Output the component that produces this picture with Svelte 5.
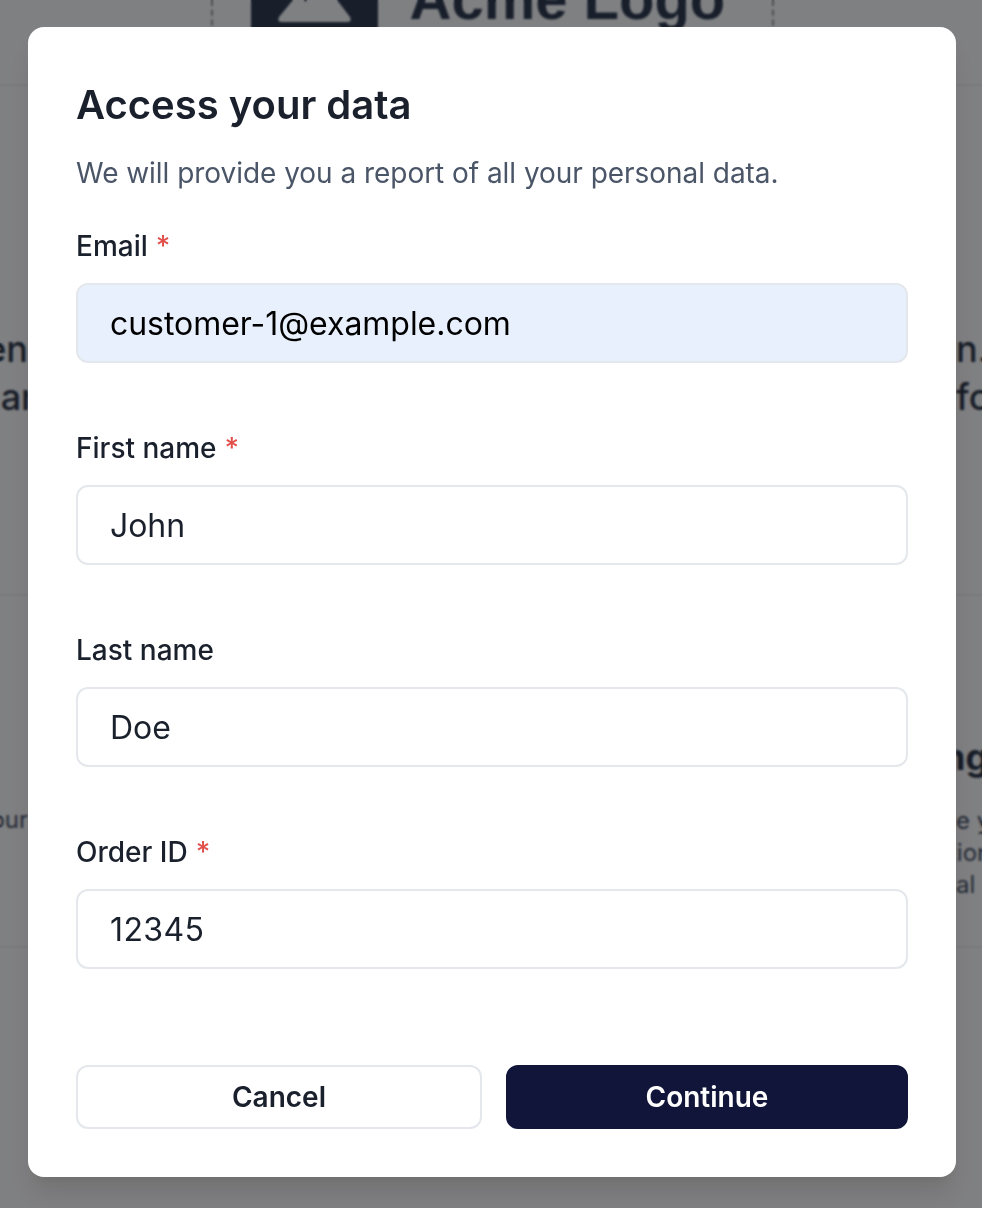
<script lang="ts">
  type Field = { label: string; value: string; required: boolean; filled?: boolean; numeric?: boolean };

  const fields: Field[] = [
    { label: 'Email', value: 'customer-1@example.com', required: true, filled: true },
    { label: 'First name', value: 'John', required: true },
    { label: 'Last name', value: 'Doe', required: false },
    { label: 'Order ID', value: '12345', required: true, numeric: true }
  ];
</script>

<div class="page">
  <header class="site-header">
    <div class="logo-frame">
      <div class="logo-mark">
        <svg width="127" height="24" viewBox="0 0 127 24" aria-hidden="true">
          <path d="M42 0 L53 0 L54.5 2 L56 0 L86 0 L99 17 Q101.5 22 96 22 L31 22 Q25.5 22 28 17 Z" fill="#fff" />
        </svg>
      </div>
      <span class="logo-text">Acme Logo</span>
    </div>
  </header>

  <section class="band band-top">
    <div class="edge edge-left">
      <p class="big">en</p>
      <p class="big nudge">tar</p>
    </div>
    <div class="edge edge-right">
      <p class="big">n.</p>
      <p class="big">fo</p>
    </div>
  </section>

  <section class="band band-mid">
    <div class="edge edge-left">
      <p class="small">our</p>
    </div>
    <div class="edge edge-right">
      <p class="heading">ng</p>
      <p class="small">e y</p>
      <p class="small cut">tion</p>
      <p class="small">al</p>
    </div>
  </section>
</div>

<div class="overlay">
  <div class="modal">
    <h2>Access your data</h2>
    <p class="desc">We will provide you a report of all your personal data.</p>

    <form class="fields">
      {#each fields as field}
        <div class="field">
          <label for={field.label}>
            {field.label}{#if field.required}<span class="req">*</span>{/if}
          </label>
          <input id={field.label} class:filled={field.filled} class:numeric={field.numeric} value={field.value} />
        </div>
      {/each}
    </form>

    <div class="actions">
      <button type="button" class="btn cancel">Cancel</button>
      <button type="button" class="btn primary">Continue</button>
    </div>
  </div>
</div>

<style>
  :global(body) {
    margin: 0;
    background: #fff;
    font-family: Inter, "Liberation Sans", sans-serif;
  }

  .page {
    height: 1208px;
    overflow: hidden;
    color: #2d3748;
  }

  .site-header {
    height: 86px;
    display: flex;
    justify-content: center;
    border-bottom: 2px solid #f0f0f1;
    box-sizing: border-box;
  }

  .logo-frame {
    width: 563px;
    height: 84px;
    margin-left: 2px;
    box-sizing: border-box;
    border-left: 2px dashed #9a9da3;
    border-right: 2px dashed #9a9da3;
    display: flex;
    align-items: flex-start;
    gap: 32px;
    padding-left: 38px;
  }

  .logo-mark {
    width: 127px;
    height: 60px;
    flex: none;
    background: #303c50;
  }

  .logo-mark svg {
    display: block;
  }

  .logo-text {
    font-family: "Liberation Sans", Arial, sans-serif;
    font-size: 58px;
    font-weight: 700;
    line-height: 1;
    margin-top: -30px;
    white-space: nowrap;
    color: #303c50;
  }

  .band {
    display: flex;
    justify-content: space-between;
    box-sizing: border-box;
    border-bottom: 2px solid #f0f0f1;
  }

  .band-top {
    height: 510px;
    padding-top: 239px;
  }

  .band-mid {
    height: 352px;
    padding-top: 139px;
  }

  .edge {
    overflow: hidden;
    display: flex;
    flex-direction: column;
  }

  .edge-left {
    align-items: flex-end;
    width: 28px;
  }

  .edge-right {
    width: 26px;
  }

  p {
    margin: 0;
  }

  .big {
    font-size: 36px;
    font-weight: 500;
    line-height: 48px;
    white-space: nowrap;
  }

  .nudge {
    margin-right: -7px;
  }

  .small {
    font-size: 24px;
    line-height: 32px;
    white-space: nowrap;
    color: #4a5568;
  }

  .cut {
    margin-left: -7px;
  }

  .heading {
    font-size: 36px;
    font-weight: 700;
    line-height: 44px;
    margin-left: -13px;
    margin-bottom: 26px;
    white-space: nowrap;
  }

  .band-mid .edge-left {
    padding-top: 69px;
  }

  .overlay {
    position: fixed;
    inset: 0;
    background: rgba(0, 2, 5, 0.5);
    backdrop-filter: blur(1px);
    display: flex;
    align-items: flex-start;
  }

  .modal {
    width: 928px;
    height: 1150px;
    margin: 27px 0 0 28px;
    box-sizing: border-box;
    padding: 48px;
    background: #fff;
    border-radius: 16px;
    box-shadow: 0 20px 25px -5px rgba(0, 0, 0, 0.1), 0 10px 10px -5px rgba(0, 0, 0, 0.04);
    display: flex;
    flex-direction: column;
    color: #1a202c;
  }

  h2 {
    margin: 0;
    font-size: 40px;
    font-weight: 600;
    line-height: 60px;
  }

  .desc {
    margin-top: 17px;
    font-size: 28px;
    line-height: 42px;
    letter-spacing: -0.04px;
    color: #4a5568;
  }

  .fields {
    margin-top: 31px;
    display: flex;
    flex-direction: column;
    gap: 64px;
  }

  .field {
    display: flex;
    flex-direction: column;
    gap: 16px;
  }

  label {
    font-size: 28px;
    font-weight: 500;
    line-height: 42px;
    height: 42px;
  }

  .req {
    margin-left: 8px;
    color: #e14f4b;
  }

  input {
    height: 80px;
    box-sizing: border-box;
    padding: 0 32px;
    border: 2px solid #e4e7ec;
    border-radius: 12px;
    background: #fff;
    font: inherit;
    font-size: 32px;
    letter-spacing: -0.04px;
    color: #1a202c;
    outline: none;
  }

  input.filled {
    background: #e8f0fe;
    color: #000;
  }

  input.numeric {
    letter-spacing: 0.4px;
  }

  .actions {
    margin-top: auto;
    display: flex;
    gap: 24px;
  }

  .btn {
    height: 64px;
    box-sizing: border-box;
    border-radius: 12px;
    font: inherit;
    font-size: 28px;
    font-weight: 600;
  }

  .cancel {
    width: 406px;
    background: #fff;
    border: 2px solid #e4e7ec;
    color: #1a202c;
  }

  .primary {
    width: 402px;
    background: #11153a;
    border: 2px solid #11153a;
    color: #fff;
  }
</style>
